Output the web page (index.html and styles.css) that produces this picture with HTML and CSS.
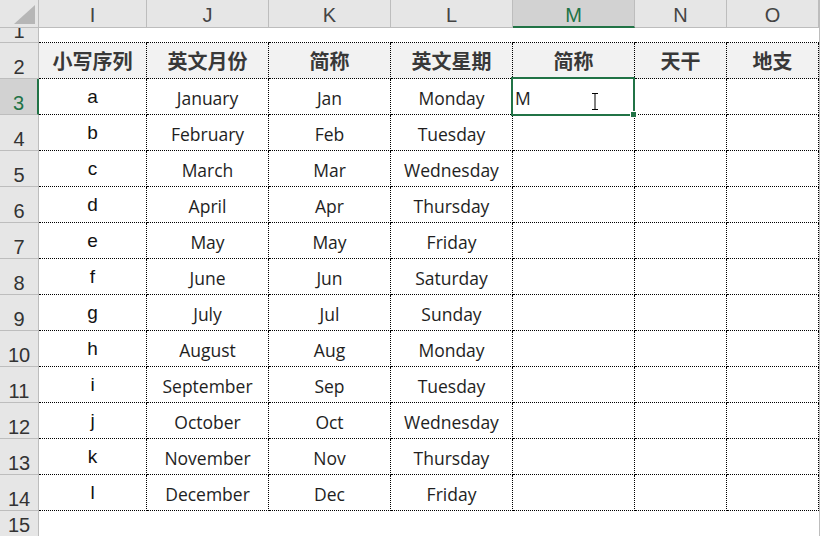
FILE: index.html
```html
<!DOCTYPE html>
<html lang="zh-CN">
<head>
<meta charset="utf-8">
<title>Sheet</title>
<link rel="stylesheet" href="styles.css">
</head>
<body>
<div class="sheet">
  <div class="edge"></div>

  <div class="corner"><svg width="39" height="27" viewBox="0 0 39 27"><polygon points="35,5 35,24 14,24" fill="#b6b6b6"/></svg></div>
  <div class="ch">I</div>
  <div class="ch">J</div>
  <div class="ch">K</div>
  <div class="ch">L</div>
  <div class="ch sel">M</div>
  <div class="ch">N</div>
  <div class="ch">O</div>

  <div class="rh">1</div>
  <div class="c top"></div><div class="c top"></div><div class="c top"></div><div class="c top"></div><div class="c top"></div><div class="c top"></div><div class="c top"></div>

  <div class="rh">2</div>
  <div class="c hd">小写序列</div><div class="c hd">英文月份</div><div class="c hd">简称</div><div class="c hd">英文星期</div><div class="c hd">简称</div><div class="c hd">天干</div><div class="c hd">地支</div>

  <div class="rh sel">3</div>
  <div class="c let">a</div><div class="c">January</div><div class="c">Jan</div><div class="c">Monday</div><div class="c edit">M</div><div class="c"></div><div class="c"></div>

  <div class="rh">4</div>
  <div class="c let">b</div><div class="c">February</div><div class="c">Feb</div><div class="c">Tuesday</div><div class="c"></div><div class="c"></div><div class="c"></div>

  <div class="rh">5</div>
  <div class="c let">c</div><div class="c">March</div><div class="c">Mar</div><div class="c">Wednesday</div><div class="c"></div><div class="c"></div><div class="c"></div>

  <div class="rh">6</div>
  <div class="c let">d</div><div class="c">April</div><div class="c">Apr</div><div class="c">Thursday</div><div class="c"></div><div class="c"></div><div class="c"></div>

  <div class="rh">7</div>
  <div class="c let">e</div><div class="c">May</div><div class="c">May</div><div class="c">Friday</div><div class="c"></div><div class="c"></div><div class="c"></div>

  <div class="rh">8</div>
  <div class="c let">f</div><div class="c">June</div><div class="c">Jun</div><div class="c">Saturday</div><div class="c"></div><div class="c"></div><div class="c"></div>

  <div class="rh">9</div>
  <div class="c let">g</div><div class="c">July</div><div class="c">Jul</div><div class="c">Sunday</div><div class="c"></div><div class="c"></div><div class="c"></div>

  <div class="rh">10</div>
  <div class="c let">h</div><div class="c">August</div><div class="c">Aug</div><div class="c">Monday</div><div class="c"></div><div class="c"></div><div class="c"></div>

  <div class="rh">11</div>
  <div class="c let">i</div><div class="c">September</div><div class="c">Sep</div><div class="c">Tuesday</div><div class="c"></div><div class="c"></div><div class="c"></div>

  <div class="rh">12</div>
  <div class="c let">j</div><div class="c">October</div><div class="c">Oct</div><div class="c">Wednesday</div><div class="c"></div><div class="c"></div><div class="c"></div>

  <div class="rh">13</div>
  <div class="c let">k</div><div class="c">November</div><div class="c">Nov</div><div class="c">Thursday</div><div class="c"></div><div class="c"></div><div class="c"></div>

  <div class="rh">14</div>
  <div class="c let">l</div><div class="c">December</div><div class="c">Dec</div><div class="c">Friday</div><div class="c"></div><div class="c"></div><div class="c"></div>

  <div class="rh last">15</div>

  <div class="active"></div>
  <div class="handle"></div>
  <svg class="ibeam" width="10" height="19" viewBox="0 0 10 19"><path d="M2 1.5h6M5 1.5v16M2 17.5h6" stroke="#000" stroke-width="1" fill="none"/></svg>
</div>
</body>
</html>
```

FILE: styles.css
```css
html, body {
  margin: 0;
  padding: 0;
  background: #fff;
  overflow: hidden;
}

.sheet {
  position: relative;
  width: 821px;
  height: 536px;
  display: grid;
  grid-template-columns: 39px 108px 122px 122px 122px 122px 92px 92px 2px;
  grid-template-rows: 28px 15px 36px repeat(12, 36px) 1fr;
  font-family: "Open Sans", "Noto Sans", sans-serif;
}

.edge {
  grid-column: 9;
  grid-row: 1 / -1;
  border-left: 1px solid #bdbdbd;
  background: #fff;
}

.corner {
  background: #e6e6e6;
  border-right: 1px solid #bdbdbd;
  border-bottom: 1px solid #bdbdbd;
  overflow: hidden;
}
.corner svg { display: block; }

.ch {
  background: #e6e6e6;
  border-right: 1px solid #bdbdbd;
  border-bottom: 1px solid #bdbdbd;
  display: flex;
  align-items: flex-end;
  justify-content: center;
  font-family: "Liberation Sans", Arial, sans-serif;
  font-size: 20px;
  line-height: 23px;
  color: #444;
  overflow: hidden;
}
.ch.sel {
  background: #d2d2d2;
  color: #217346;
  border-bottom: 2px solid #217346;
  line-height: 22px;
}

.rh {
  background: #e6e6e6;
  border-right: 1px solid #bdbdbd;
  border-bottom: 1px solid #bdbdbd;
  display: flex;
  align-items: flex-end;
  justify-content: center;
  font-family: "Liberation Sans", Arial, sans-serif;
  font-size: 20px;
  line-height: 22px;
  color: #333;
  overflow: hidden;
  box-sizing: border-box;
}
.rh.sel {
  background: #d2d2d2;
  color: #217346;
  border-right: 2px solid #217346;
}
.rh.last { border-bottom: none; }

.c {
  border-right: 1px dotted #000;
  border-bottom: 1px dotted #000;
  display: flex;
  align-items: center;
  justify-content: center;
  padding-top: 3px;
  box-sizing: border-box;
  font-size: 17.5px;
  color: #1e1e1e;
  white-space: nowrap;
  overflow: hidden;
}
.c.top {
  border-right: none;
  padding: 0;
}
.c.hd {
  background: #f2f2f2;
  padding: 0;
  font-family: "Noto Sans CJK SC", "Noto Sans", sans-serif;
  font-weight: 700;
  font-size: 20px;
  color: #383838;
}
.c.let {
  padding: 0;
  font-family: "Liberation Sans", Arial, sans-serif;
  font-size: 19px;
  color: #111;
}
.c.edit {
  justify-content: flex-start;
  padding-left: 2px;
}

.active {
  position: absolute;
  left: 511px;
  top: 77px;
  width: 124px;
  height: 39px;
  box-sizing: border-box;
  border: 2px solid #217346;
}
.handle {
  position: absolute;
  left: 630px;
  top: 111px;
  width: 5px;
  height: 5px;
  background: #217346;
  border: 1px solid #fff;
}
.ibeam {
  position: absolute;
  left: 590px;
  top: 92px;
}
```
